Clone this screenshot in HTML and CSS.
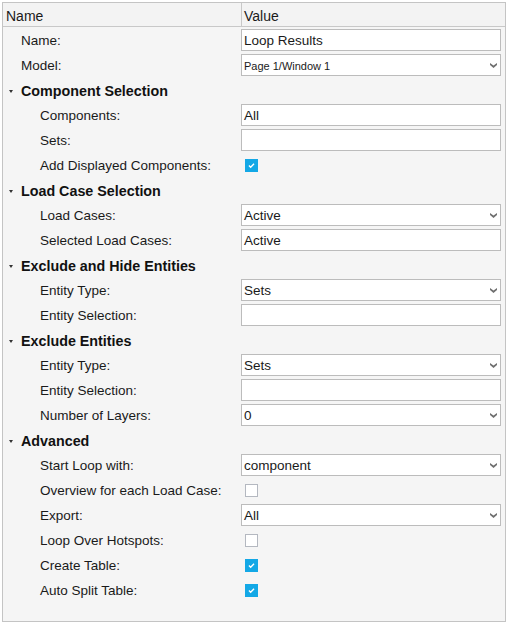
FILE: index.html
```html
<!DOCTYPE html>
<html>
<head>
<meta charset="utf-8">
<link rel="stylesheet" href="styles.css">
</head>
<body>
<div class="panel">
  <div class="head">
    <div class="hname">Name</div>
    <div class="hval">Value</div>
  </div>
  <div class="rows">
    <div class="row"><div class="lbl l1">Name:</div><div class="val"><div class="field">Loop Results</div></div></div>
    <div class="row"><div class="lbl l1">Model:</div><div class="val"><div class="field sel small">Page 1/Window 1<svg class="arr" viewBox="0 0 7 5"><path d="M0 0L3.5 2.5L7 0V2L3.5 5L0 2Z"/></svg></div></div></div>
    <div class="row grp"><div class="lbl l0"><span class="tri"></span>Component Selection</div></div>
    <div class="row"><div class="lbl l2">Components:</div><div class="val"><div class="field">All</div></div></div>
    <div class="row"><div class="lbl l2">Sets:</div><div class="val"><div class="field"></div></div></div>
    <div class="row"><div class="lbl l2">Add Displayed Components:</div><div class="val"><span class="cb on"><svg viewBox="0 0 13 13"><path d="M3.5 6.5L5.5 8.5L9.5 4.5"/></svg></span></div></div>
    <div class="row grp"><div class="lbl l0"><span class="tri"></span>Load Case Selection</div></div>
    <div class="row"><div class="lbl l2">Load Cases:</div><div class="val"><div class="field sel">Active<svg class="arr" viewBox="0 0 7 5"><path d="M0 0L3.5 2.5L7 0V2L3.5 5L0 2Z"/></svg></div></div></div>
    <div class="row"><div class="lbl l2">Selected Load Cases:</div><div class="val"><div class="field">Active</div></div></div>
    <div class="row grp"><div class="lbl l0"><span class="tri"></span>Exclude and Hide Entities</div></div>
    <div class="row"><div class="lbl l2">Entity Type:</div><div class="val"><div class="field sel">Sets<svg class="arr" viewBox="0 0 7 5"><path d="M0 0L3.5 2.5L7 0V2L3.5 5L0 2Z"/></svg></div></div></div>
    <div class="row"><div class="lbl l2">Entity Selection:</div><div class="val"><div class="field"></div></div></div>
    <div class="row grp"><div class="lbl l0"><span class="tri"></span>Exclude Entities</div></div>
    <div class="row"><div class="lbl l2">Entity Type:</div><div class="val"><div class="field sel">Sets<svg class="arr" viewBox="0 0 7 5"><path d="M0 0L3.5 2.5L7 0V2L3.5 5L0 2Z"/></svg></div></div></div>
    <div class="row"><div class="lbl l2">Entity Selection:</div><div class="val"><div class="field"></div></div></div>
    <div class="row"><div class="lbl l2">Number of Layers:</div><div class="val"><div class="field sel">0<svg class="arr" viewBox="0 0 7 5"><path d="M0 0L3.5 2.5L7 0V2L3.5 5L0 2Z"/></svg></div></div></div>
    <div class="row grp"><div class="lbl l0"><span class="tri"></span>Advanced</div></div>
    <div class="row"><div class="lbl l2">Start Loop with:</div><div class="val"><div class="field sel">component<svg class="arr" viewBox="0 0 7 5"><path d="M0 0L3.5 2.5L7 0V2L3.5 5L0 2Z"/></svg></div></div></div>
    <div class="row"><div class="lbl l2">Overview for each Load Case:</div><div class="val"><span class="cb"></span></div></div>
    <div class="row"><div class="lbl l2">Export:</div><div class="val"><div class="field sel">All<svg class="arr" viewBox="0 0 7 5"><path d="M0 0L3.5 2.5L7 0V2L3.5 5L0 2Z"/></svg></div></div></div>
    <div class="row"><div class="lbl l2">Loop Over Hotspots:</div><div class="val"><span class="cb"></span></div></div>
    <div class="row"><div class="lbl l2">Create Table:</div><div class="val"><span class="cb on"><svg viewBox="0 0 13 13"><path d="M3.5 6.5L5.5 8.5L9.5 4.5"/></svg></span></div></div>
    <div class="row"><div class="lbl l2">Auto Split Table:</div><div class="val"><span class="cb on"><svg viewBox="0 0 13 13"><path d="M3.5 6.5L5.5 8.5L9.5 4.5"/></svg></span></div></div>
  </div>
</div>
</body>
</html>
```
FILE: styles.css
```css
html, body { margin: 0; padding: 0; background: #ffffff; }
body { font-family: "Liberation Sans", Arial, sans-serif; color: #1a1a1a; }
.panel {
  margin: 2px;
  width: 502px;
  height: 618px;
  border: 1px solid #c4c4c4;
  background: #f5f5f5;
  overflow: hidden;
}
.head {
  display: flex;
  height: 23px;
  border-bottom: 1px solid #c8c8c8;
  background: #f3f3f3;
  font-size: 14px;
}
.hname { width: 238px; padding-left: 3px; padding-top: 2px; box-sizing: border-box; display: flex; align-items: center; }
.hval { flex: 1; border-left: 1px solid #c8c8c8; padding-left: 2px; padding-top: 2px; display: flex; align-items: center; }
.row { display: flex; height: 25px; align-items: center; }
.lbl { width: 238px; box-sizing: border-box; font-size: 13.5px; white-space: nowrap; display: flex; align-items: center; padding-top: 2px; }
.l1 { padding-left: 18px; }
.l2 { padding-left: 37px; }
.l0 { padding-left: 6px; font-weight: bold; font-size: 14.3px; color: #111; }
.tri {
  width: 0; height: 0;
  border-left: 2.5px solid transparent;
  border-right: 2.5px solid transparent;
  border-top: 3px solid #333;
  margin-right: 8px;
  margin-top: 2px;
}
.val { flex: 1; display: flex; align-items: center; }
.field {
  width: 260px;
  height: 22px;
  margin-top: 1px;
  box-sizing: border-box;
  border: 1px solid #bcbcbc;
  background: #ffffff;
  font-size: 13.5px;
  padding-left: 2px;
  padding-top: 1px;
  display: flex;
  align-items: center;
  position: relative;
}
.small { font-size: 11px; }
.arr { position: absolute; right: 3px; top: 8px; width: 7px; height: 5px; fill: #707070; }
.cb {
  width: 13px; height: 13px;
  margin-left: 4px;
  margin-top: 1px;
  box-sizing: border-box;
  border: 1px solid #b4b8c0;
  background: #ffffff;
  display: block;
}
.cb.on { background: #13a8e6; border-color: #13a8e6; }
.cb svg { width: 11px; height: 11px; display: block; fill: none; stroke: #ffffff; stroke-width: 1.6; }
```
